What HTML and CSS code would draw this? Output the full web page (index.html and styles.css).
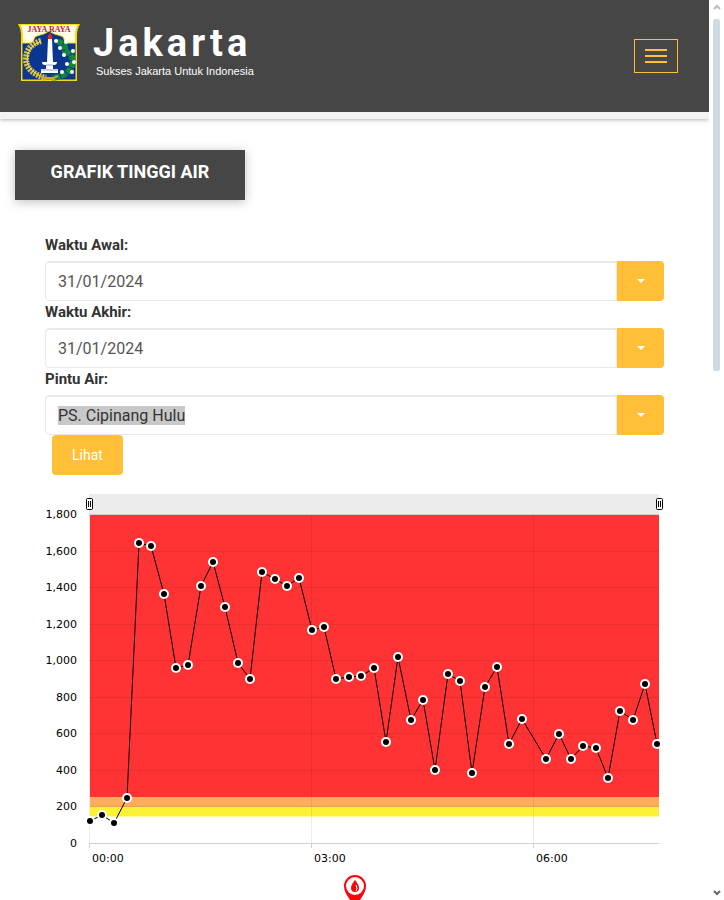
FILE: index.html
```
<!DOCTYPE html>
<html lang="id">

<head>
    <meta charset="utf-8">
    <title>Grafik Tinggi Air</title>
    <link rel="stylesheet" href="styles.css">
</head>

<body>
    <div class="page">
        <header class="header">
            <a href="#" class="brand">
                <svg class="brand-logo" viewBox="0 0 62 58" aria-hidden="true">
                    <path d="M0 1h62q-3 5-3 10v47H3V11Q3 6 0 1z" fill="#f8d90f" />
                    <path d="M3 2h56q-2 5-2 9v9H5v-9Q5 7 3 2z" fill="#fffbe6" />
                    <path d="M4 20h8q4 0 4-4 0-3 6-4 5-1 9-4 4 3 9 4 6 1 6 4 0 4 4 4h8v37H4z" fill="#0a3590" stroke="#f8d90f" />
                    <text x="31" y="9" text-anchor="middle" class="brand-motto">JAYA RAYA</text>
                    <path d="M32 10q3 3 2 6h-4q-1-3 2-6z" fill="#e8261c" />
                    <path d="M30 16h4l1 23h4q0 3-3 3h-1v4h5v4H23v-4h5v-4h-1q-3 0-3-3h5z" fill="#fff" />
                    <path d="M28 42h7M23 47h17" stroke="#8ca0cd" fill="none" />
                    <path d="M23 18Q8 22 8 37q1 13 20 18" fill="none" stroke="#dcc23a" stroke-width="6" stroke-dasharray="2 1" />
                    <path d="M23 18Q9 24 9 37q1 12 18 18" fill="none" stroke="#fae45a" />
                    <path d="M39 19q9 0 8 9 10 4 7 14-3 11-20 13" fill="none" stroke="#12883a" stroke-width="6" stroke-dasharray="6 1" />
                    <g fill="#fff">
                        <circle cx="38" cy="18" r="2" />
                        <circle cx="48" cy="19" r="2" />
                        <circle cx="42" cy="25" r="2" />
                        <circle cx="55" cy="28" r="2" />
                        <circle cx="46" cy="32" r="2" />
                        <circle cx="56" cy="39" r="2" />
                        <circle cx="49" cy="41" r="2" />
                        <circle cx="44" cy="49" r="2" />
                        <circle cx="54" cy="49" r="2" />
                    </g>
                    <path d="M22 53q9 5 18 0M25 57q6-4 12 0" fill="none" stroke="#c9ab35" stroke-width="2" />
                </svg>
                <span class="brand-text">
                    <span class="brand-name">Jakarta</span>
                    <span class="brand-tagline">Sukses Jakarta Untuk Indonesia</span>
                </span>
            </a>
            <button type="button" class="menu-toggle" aria-label="Menu">
                <span class="bar"></span>
                <span class="bar"></span>
                <span class="bar"></span>
            </button>
        </header>

        <main class="content">
            <h1 class="title">GRAFIK TINGGI AIR</h1>
            <form class="filter-form">
                <label for="startDate">Waktu Awal:</label>
                <div class="combo">
                    <input type="text" id="startDate" name="startDate" value="31/01/2024">
                    <button type="button" aria-label="Pilih waktu awal"><span class="caret"></span></button>
                </div>
                <label for="endDate">Waktu Akhir:</label>
                <div class="combo">
                    <input type="text" id="endDate" name="endDate" value="31/01/2024">
                    <button type="button" aria-label="Pilih waktu akhir"><span class="caret"></span></button>
                </div>
                <label for="gate">Pintu Air:</label>
                <div class="combo">
                    <input type="text" id="gate" name="gate" value="PS. Cipinang Hulu">
                    <button type="button" aria-label="Pilih pintu air"><span class="caret"></span></button>
                </div>
                <button type="button" class="submit-button">Lihat</button>
            </form>

            <svg class="chart" viewBox="0 0 619 376" role="img" aria-label="Grafik tinggi air">
                <defs>
                    <marker id="dot" viewBox="0 0 12 12" refX="6" refY="6" markerWidth="12" markerHeight="12" markerUnits="userSpaceOnUse">
                        <circle cx="6" cy="6" r="5" fill="#fff" />
                        <circle cx="6" cy="6" r="3" fill="#000" />
                    </marker>
                </defs>
                <!-- scrollbar -->
                <rect x="44" width="570" height="20" fill="#ececec" />
                <path d="M44 20.5h570" stroke="#d0d0d0" />
                <!-- alert levels -->
                <rect x="45" y="21" width="569" height="282" fill="#f33" />
                <rect x="45" y="303" width="569" height="10" fill="#ffad5c" />
                <rect x="45" y="313" width="569" height="9" fill="#fcf233" />
                <rect x="45" y="322" width="569" height="1" fill="#fdf8a0" />
                <!-- grid -->
                <g class="grid">
                    <path d="M45 57.5h569M45 93.5h569M45 130.5h569M45 166.5h569M45 203.5h569M45 239.5h569M45 276.5h569M45 312.5h569" />
                    <path d="M44.5 21v328M266.5 21v328M488.5 21v328" />
                </g>
                <path d="M44.5 349v5M266.5 349v5M488.5 349v5M44 349.5h570" stroke="#d0d0d0" />
                <polyline class="series" points="45,327 57,321 69,329 82,304 94,49 106,52 119,100 131,174 143,171 156,92 168,68 180,113 193,169 205,185 217,78 230,85 242,92 254,84 267,136 279,133 291,185 304,183 316,182 329,174 341,248 353,163 366,226 378,206 390,276 403,180 415,187 427,279 440,193 452,173 464,250 477,225 501,265 514,240 526,265 538,252 551,254 563,284 575,217 588,226 600,190 612,250" />
                <!-- range grips -->
                <g fill="#fff" stroke="#000">
                    <rect x="41.5" y="4.5" width="6" height="11" rx="1" />
                    <path d="M43.5 7v6M45.5 7v6" />
                    <rect x="611.5" y="4.5" width="6" height="11" rx="1" />
                    <path d="M613.5 7v6M615.5 7v6" />
                </g>
                <g class="axis" text-anchor="end">
                    <text x="32" y="24">1,800</text>
                    <text x="32" y="61">1,600</text>
                    <text x="32" y="97">1,400</text>
                    <text x="32" y="134">1,200</text>
                    <text x="32" y="170">1,000</text>
                    <text x="32" y="207">800</text>
                    <text x="32" y="243">600</text>
                    <text x="32" y="280">400</text>
                    <text x="32" y="316">200</text>
                    <text x="32" y="353">0</text>
                </g>
                <g class="axis">
                    <text x="47" y="368">00:00</text>
                    <text x="269" y="368">03:00</text>
                    <text x="491" y="368">06:00</text>
                </g>
            </svg>

            <svg class="pin" viewBox="0 0 22 32" aria-hidden="true">
                <path d="M11 0a11 11 0 0 1 11 11c0 7-5 12-11 21C5 23 0 18 0 11A11 11 0 0 1 11 0z" fill="#f90505" />
                <circle cx="11" cy="11" r="9" fill="#fff" />
                <path d="M11 5q4 5 4 8a4 4 0 0 1-8 0q0-3 4-8z" fill="#f90505" />
                <path d="M12 10q2 4 0 6" fill="none" stroke="#fff" />
            </svg>
        </main>
    </div>
    <div class="scrollbar" aria-hidden="true">
        <svg class="arrow" viewBox="0 0 8 6"><path d="M1 5l3-3 3 3" fill="none" stroke="#bbb" stroke-width="2" /></svg>
        <div class="scroll-thumb"></div>
        <svg class="arrow" viewBox="0 0 8 6"><path d="M1 1l3 3 3-3" fill="none" stroke="#666" stroke-width="2" /></svg>
    </div>
    <script src="options.js"></script>
</body>

</html>
```
FILE: styles.css
```
* {
    box-sizing: border-box;
}

body {
    display: flex;
    height: 100vh;
    margin: 0;
    overflow: hidden;
    font-family: Roboto, sans-serif;
    color: #333;
    background-color: #fff;
}

.page {
    flex: 1;
    min-width: 0;
    overflow: hidden;
}

.header {
    display: flex;
    align-items: center;
    justify-content: space-between;
    height: 119px;
    padding: 0 31px 0 18px;
    background-color: #464646;
    border-bottom: 7px solid #f3f3f3;
    box-shadow: 0 1px 4px rgba(0, 0, 0, 0.3);
}

.brand {
    display: flex;
    gap: 13px;
    color: #fff;
    text-decoration: none;
    margin-bottom: 8px;
}

.brand-logo {
    width: 62px;
    height: 58px;
}

.brand-motto {
    font: bold 8px "Liberation Serif", serif;
    fill: #c8201a;
}

.brand-text {
    display: flex;
    flex-direction: column;
}

.brand-name {
    font-size: 38px;
    font-weight: bold;
    line-height: 40px;
    letter-spacing: 4px;
}

.brand-tagline {
    padding-left: 3px;
    font-family: "Liberation Sans", sans-serif;
    font-size: 11px;
    line-height: 16px;
}

.menu-toggle {
    display: flex;
    flex-direction: column;
    align-items: center;
    justify-content: center;
    gap: 4px;
    width: 44px;
    height: 34px;
    padding: 0;
    border: 1px solid #ffbf36;
    background: none;
}

.menu-toggle .bar {
    width: 22px;
    height: 2px;
    background-color: #ffbf36;
}

.content {
    padding: 31px 15px 0;
}

.title {
    width: 230px;
    margin: 0;
    padding: 12px 0 18px;
    text-align: center;
    font-size: 18px;
    line-height: 20px;
    color: #fff;
    background-color: #464646;
    box-shadow: 0 2px 10px rgba(0, 0, 0, 0.25);
}

.filter-form {
    margin: 34px 30px 0;
}

.filter-form label {
    display: block;
    padding-bottom: 5px;
    font-size: 15px;
    font-weight: bold;
    line-height: 22px;
}

.combo {
    display: flex;
    height: 40px;
}

.combo input {
    flex: 1;
    min-width: 0;
    padding: 0 12px;
    border: 1px solid #e9e9e9;
    border-radius: 4px 0 0 4px;
    outline: none;
    font-family: inherit;
    font-size: 16px;
    color: #555;
    box-shadow: inset 0 1px 0 #e9e9e9;
}

.combo input::selection {
    color: #333;
    background-color: #c8c8c8;
}

.combo button {
    display: flex;
    align-items: center;
    justify-content: center;
    width: 47px;
    padding: 0;
    border: none;
    border-radius: 0 4px 4px 0;
    background-color: #ffbf36;
}

.caret {
    border: 4px solid transparent;
    border-top-color: #fff;
    border-bottom: none;
}

.submit-button {
    display: block;
    height: 40px;
    margin-left: 7px;
    padding: 0 20px;
    border: none;
    border-radius: 4px;
    font-family: inherit;
    font-size: 14px;
    color: #fff;
    background-color: #ffbf36;
}

.chart {
    display: block;
    width: calc(100% - 60px);
    margin: 19px 30px 0;
}

.grid path {
    fill: none;
    stroke: rgba(0, 0, 0, 0.08);
}

.series {
    fill: none;
    stroke: #000;
    marker-start: url(#dot);
    marker-mid: url(#dot);
    marker-end: url(#dot);
}

.axis {
    font-family: "DejaVu Sans", Verdana, sans-serif;
    font-size: 11px;
    fill: #000;
}

.pin {
    display: block;
    width: 22px;
    height: 32px;
    margin: 5px auto 0;
}

.scrollbar {
    display: flex;
    flex-direction: column;
    align-items: center;
    width: 15px;
    padding: 4px 0;
}

.arrow {
    width: 8px;
    height: 6px;
}

.scroll-thumb {
    width: 7px;
    height: 39.5%;
    margin: 9px 0 auto;
    border-radius: 2px;
    background-color: #cfdae3;
}
```
FILE: options.js
```
const gate = document.getElementById('gate');
gate.focus();
gate.select();
```
